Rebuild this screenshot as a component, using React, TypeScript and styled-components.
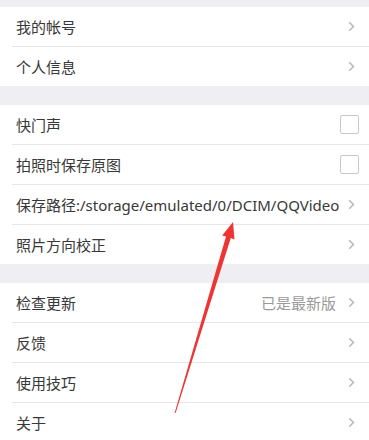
import React from "react";
import styled, { createGlobalStyle } from "styled-components";

const GlobalStyle = createGlobalStyle`
  html, body {
    margin: 0;
    padding: 0;
    background: #efeff3;
  }
  body {
    font-family: "Noto Sans", "Noto Sans CJK SC", sans-serif;
  }
`;

const Page = styled.div`
  position: relative;
  width: 369px;
  height: 440px;
  overflow: hidden;
  padding-top: 7px;
  box-sizing: border-box;
  background: #efeff3;
  display: flex;
  flex-direction: column;
  gap: 19px;
`;

const Section = styled.div`
  background: #fff;
`;

const Row = styled.div`
  height: 39px;
  margin-left: 12px;
  padding: 0 10px 0 4px;
  display: flex;
  align-items: center;
  border-bottom: 1px solid #e6e6e9;
  &:last-child {
    border-bottom: none;
  }
`;

const Label = styled.span`
  flex: 1;
  font-size: 15px;
  color: #383838;
  white-space: nowrap;
`;

const Value = styled.span`
  font-size: 15px;
  color: #9a9a9a;
  margin-right: 12px;
`;

const Chevron = styled.svg`
  width: 7px;
  height: 11px;
  margin-right: 4px;
`;

const Checkbox = styled.div`
  width: 17px;
  height: 17px;
  border: 1.5px solid #c8c8c8;
  border-radius: 2px;
`;

const Arrow = styled.svg`
  position: absolute;
  left: 0;
  top: 0;
  width: 369px;
  height: 440px;
  pointer-events: none;
`;

const Arr = () => (
  <Chevron viewBox="0 0 7 11">
    <path d="M1.2 1.2 L5.4 5.5 L1.2 9.8" fill="none" stroke="#bababa" strokeWidth="1.6" />
  </Chevron>
);

type Item = { label: string; value?: string; check?: boolean };

const sections: Item[][] = [
  [{ label: "我的帐号" }, { label: "个人信息" }],
  [
    { label: "快门声", check: true },
    { label: "拍照时保存原图", check: true },
    { label: "保存路径:/storage/emulated/0/DCIM/QQVideo" },
    { label: "照片方向校正" },
  ],
  [
    { label: "检查更新", value: "已是最新版" },
    { label: "反馈" },
    { label: "使用技巧" },
    { label: "关于" },
  ],
];

export default function App() {
  return (
    <>
      <GlobalStyle />
      <Page>
        {sections.map((items, i) => (
          <Section key={i}>
            {items.map((it) => (
              <Row key={it.label}>
                <Label>{it.label}</Label>
                {it.value && <Value>{it.value}</Value>}
                {it.check ? <Checkbox /> : <Arr />}
              </Row>
            ))}
          </Section>
        ))}
        <Arrow viewBox="0 0 369 440">
          <polygon
            points="233,222 234.5,239.5 230.8,238 175.6,413 174.6,413 226,236.6 222.2,235.4"
            fill="#ef3434"
          />
        </Arrow>
      </Page>
    </>
  );
}
